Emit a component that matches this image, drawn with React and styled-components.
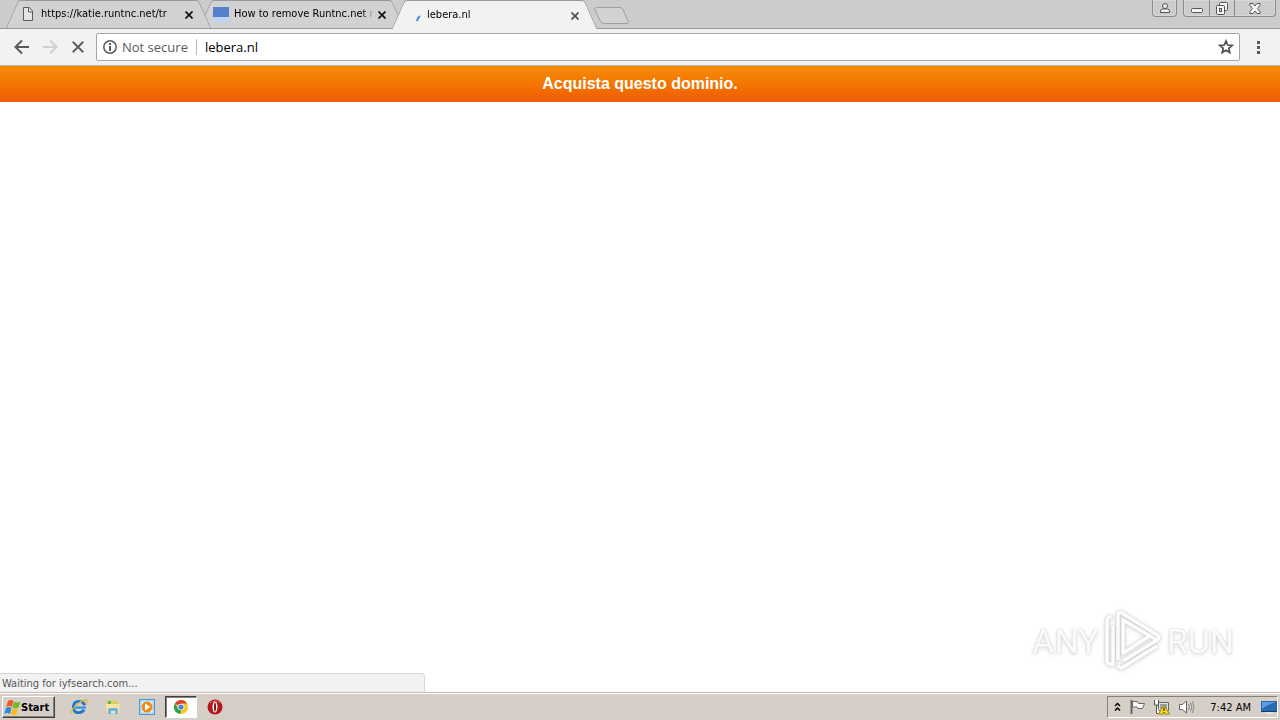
import React from "react";
import styled, { createGlobalStyle } from "styled-components";

const ui = `"DejaVu Sans Condensed", "DejaVu Sans", "Noto Sans", sans-serif`;

const GlobalStyle = createGlobalStyle`
  *, *::before, *::after { box-sizing: border-box; }
  body { margin: 0; background: #fff; font-family: ${ui}; font-size: 11px; color: #000; }
  button, input { font: inherit; color: inherit; }
  button { margin: 0; padding: 0; border: 0; background: none; }
  svg { display: block; flex: none; }
`;

const Screen = styled.div`
  min-height: 100vh;
  display: flex;
  flex-direction: column;
`;

const TabStrip = styled.header`
  height: 29px;
  display: flex;
  align-items: flex-start;
  padding: 0 4px 0 12px;
  background: #ccc;
  border-bottom: 1px solid #999;
`;

const Tabs = styled.div`
  display: flex;
`;

const TabShell = styled.div`
  position: relative;
  z-index: ${(p) => p.$level};
  width: 193px;
  height: ${(p) => (p.$active ? 29 : 28)}px;
  display: flex;
  align-items: center;
  padding: 0 8px;

  &::before, &::after {
    content: "";
    position: absolute;
    z-index: -1;
    top: 0;
    bottom: 0;
    width: 60%;
    background: ${(p) => (p.$active ? "#f2f2f2" : "#d2d2d2")};
    border-top: 1px solid #999;
  }
  &::before {
    left: 0;
    border-left: 1px solid #999;
    border-top-left-radius: 3px;
    transform: skewX(-24deg);
  }
  &::after {
    right: 0;
    border-right: 1px solid #999;
    border-top-right-radius: 3px;
    transform: skewX(24deg);
  }
`;

const TabLabel = styled.button`
  flex: 1;
  min-width: 0;
  display: flex;
  align-items: center;
  gap: 5px;
  height: 28px;
`;

const TabTitle = styled.span`
  flex: 1;
  overflow: hidden;
  white-space: nowrap;
  text-align: left;
  line-height: 16px;
  mask-image: linear-gradient(to right, #000 92%, transparent);
`;

const TabClose = styled.button`
  width: 16px;
  height: 18px;
  display: grid;
  place-items: end center;
  padding-bottom: 4px;
`;

const NewTab = styled.button`
  margin: 7px 0 0 3px;
`;

const WindowControls = styled.div`
  margin-left: auto;
  display: flex;
`;

const ControlGroup = styled.div`
  display: flex;
  height: 17px;
  margin-left: 6px;
  border: 1px solid #8c8c8c;
  border-top: 0;
  border-radius: 0 0 4px 4px;
  box-shadow: inset 0 0 0 1px #d8d8d8;
`;

const ControlButton = styled.button`
  width: ${(p) => p.$width}px;
  display: grid;
  place-items: center;
  & + & { border-left: 1px solid #8c8c8c; }
`;

const Toolbar = styled.nav`
  height: 37px;
  display: flex;
  align-items: center;
  padding: 0 8px;
  background: #f2f2f2;
  border-bottom: 1px solid #b6b4ae;
`;

const ToolButton = styled.button`
  width: 28px;
  height: 28px;
  display: grid;
  place-items: center;
`;

const Omnibox = styled.form`
  flex: 1;
  height: 28px;
  display: flex;
  align-items: center;
  margin: 0 4px;
  padding: 0 5px 0 6px;
  background: #fff;
  border: 1px solid #a6a6a6;
  border-radius: 2px;
  font: 13px "Open Sans", "Noto Sans", sans-serif;
`;

const Security = styled.button`
  display: flex;
  align-items: center;
  gap: 5px;
  padding-right: 8px;
  line-height: 16px;
  border-right: 1px solid #b8b8b8;
  color: #5a5a5a;
`;

const Address = styled.input`
  flex: 1;
  min-width: 0;
  padding: 0 8px;
  border: 0;
  outline: 0;
  background: none;
  line-height: 20px;
`;

const Page = styled.main`
  flex: 1;
  display: flex;
  flex-direction: column;
`;

const Banner = styled.a`
  height: 36px;
  background: linear-gradient(#f78d05, #ef5c00);
  color: #fff;
  text-align: center;
  text-decoration: none;
  font: bold 16px/36px "Liberation Sans", Arial, sans-serif;
`;

const PageFoot = styled.div`
  flex: 1;
  display: flex;
  align-items: flex-end;
  justify-content: space-between;
`;

const StatusBubble = styled.output`
  flex: 0 1 425px;
  height: 19px;
  padding: 0 2px;
  line-height: 19px;
  color: #555;
  background: #f2f2f2;
  border: 1px solid #d8d8d8;
  border-width: 1px 1px 0 0;
  border-top-right-radius: 4px;
`;

const Watermark = styled.div`
  display: flex;
  align-items: center;
  gap: 4px;
  margin: 0 46px 19px 0;
  color: #fbfbfb;
  font: 34px/60px "Roboto", sans-serif;
  text-shadow: 0 0 2px #c8c8c8, 0 2px 4px #ddd;
`;

const Mark = styled.svg`
  filter: drop-shadow(0 0 1px #c4c4c4) drop-shadow(0 1px 2px #e0e0e0);
`;

const Taskbar = styled.footer`
  height: 28px;
  display: flex;
  align-items: center;
  padding: 1px 2px 0;
  background: #d5cfc7;
  border-top: 1px solid #c4c0b8;
  box-shadow: inset 0 1px #fff;
`;

const StartButton = styled.button`
  width: 53px;
  height: 22px;
  display: flex;
  align-items: center;
  padding-left: 1px;
  border: 1px solid;
  border-color: #fff #404040 #404040 #fff;
  box-shadow: inset -1px -1px #858078;
  font-weight: bold;
`;

const Launchers = styled.div`
  display: flex;
  margin-left: 8px;
  gap: 2px;
`;

const Launcher = styled.button`
  width: 32px;
  height: 22px;
  display: grid;
  place-items: center;
  border: 1px solid transparent;
  ${(p) => p.$active && `
    background: #fff;
    border-color: #404040 #fff #fff #404040;
    box-shadow: inset 1px 1px #858078;
  `}
`;

const Tray = styled.div`
  height: 22px;
  margin-left: auto;
  display: flex;
  align-items: center;
  gap: 8px;
  padding: 0 0 0 6px;
  border: 1px solid;
  border-color: #858078 #fff #fff #858078;
`;

const Clock = styled.time`
  margin: 0 2px 0 7px;
  white-space: nowrap;
`;

const Cross = ({ size = 8, color = "#222", width = 2 }) => (
  <svg width={size} height={size} viewBox="0 0 8 8" stroke={color} strokeWidth={width}>
    <path d="M.5.5l7 7M7.500.5l-7 7" />
  </svg>
);

const PageIcon = () => (
  <svg width="16" height="16" fill="none" stroke="#5c5c5c">
    <path d="M3.500 1.500h6l3 3.500v9.500h-9z" fill="#e4e4e4" />
    <path d="M8.500 1.500v4.500h4" />
  </svg>
);

const BlueIcon = () => (
  <svg width="16" height="16">
    <path d="M0 1h16v10H0z" fill="#5580cc" />
    <path d="M0 11h16v5H0z" fill="#bdd4f5" />
  </svg>
);

const Spinner = () => (
  <svg width="16" height="16" fill="none" stroke="#4a86e8" strokeWidth="2">
    <path d="M11 14q.5-3 3-5" />
  </svg>
);

const Arrow = ({ color, flip }) => (
  <svg width="16" height="16" fill="none" stroke={color} strokeWidth="2">
    <path d={flip ? "M1 8h13M8 1.500l6.500 6.500L8 14.500" : "M15 8H2M8 1.500L1.500 8 8 14.500"} />
  </svg>
);

const InfoIcon = () => (
  <svg width="14" height="14" fill="none" stroke="#5a5a5a">
    <circle cx="7" cy="7" r="6.200" strokeWidth="1.500" />
    <path d="M7 3v2M7 6v5" strokeWidth="2" />
  </svg>
);

const StarIcon = () => (
  <svg width="16" height="16" fill="none" stroke="#505050" strokeWidth="1.700">
    <path d="M8 2l1.700 4 4.500.4-3.400 2.900 1 4.300L8 11.300l-3.800 2.300 1-4.300L1.800 6.400l4.500-.4z" />
  </svg>
);

const MenuIcon = () => (
  <svg width="3" height="14" fill="#5a5a5a">
    <path d="M0 1h3v3H0zM0 6h3v3H0zM0 11h3v3H0z" />
  </svg>
);

const NewTabIcon = () => (
  <svg width="36" height="18" fill="#d2d2d2" stroke="#a0a0a0">
    <path d="M2.500.5h23.500q2 0 3 2l5 11.500q1 2.500-1 2.500H9.500q-2 0-3-2L1 3Q0 .5 2.500.5z" />
  </svg>
);

const UserIcon = () => (
  <svg width="12" height="12" fill="#f4f4f4" stroke="#555">
    <circle cx="6" cy="4" r="2.500" />
    <path d="M1.500 10.500V9q0-1.500 2-2h5q2 .5 2 2v1.500z" />
  </svg>
);

const MinimizeIcon = () => (
  <svg width="12" height="12" fill="#f4f4f4" stroke="#555">
    <rect x=".5" y="6.500" width="11" height="4" rx="1" />
  </svg>
);

const RestoreIcon = () => (
  <svg width="14" height="13" fill="#f4f4f4" stroke="#555">
    <rect x="4.500" y=".5" width="8" height="8" rx="1" />
    <rect x="1.500" y="3.500" width="8" height="9" rx="1" />
    <rect x="4.500" y="6.500" width="2" height="3" fill="#ccc" />
  </svg>
);

const CloseIcon = () => (
  <svg width="12" height="11" fill="#f4f4f4" stroke="#555">
    <path d="M1 .5h3L6 3 8 .5h3v2L8.500 5.500 11 8.500v2H8L6 8l-2 2.500H1v-2L3.500 5.500 1 2.500z" />
  </svg>
);

const AnyRunMark = () => (
  <Mark width="60" height="64" viewBox="0 0 60 64" fill="none" strokeLinejoin="round">
    <g stroke="#fdfdfd" strokeWidth="3.500">
      <path d="M9 8q-5-1-5 4v39q0 5 6 4V17" />
      <path d="M15 6q0-4 4-2l35 22q4 3 0 5L20 11v33l28-18" />
      <path d="M15 6v45M54 31L20 52M54 37L20 58q-4 2-5-2" />
    </g>
  </Mark>
);

const WindowsFlag = () => (
  <svg width="17" height="17" viewBox="0 0 17 17">
    <path d="M4 2q3-2 5.500 0L8 8Q5 6 2 8z" fill="#ef5b28" />
    <path d="M10 2.500q3 2 6.500 0l-2 6q-3 2-6 0z" fill="#76b82a" />
    <path d="M2 9q3-2 5.500 0L6 15q-3-2-6 0z" fill="#2e8cde" />
    <path d="M8.500 9.500q3 2 5.500 0L12.500 15q-3 2-6 0z" fill="#fbbd12" />
  </svg>
);

const ExplorerIcon = () => (
  <svg width="18" height="18" viewBox="0 0 16 16" fill="none">
    <path d="M13 6.500q-1-3.500-5-3.500-5 0-5 5.200T8 13q3 0 4.500-2.500" stroke="#1979d2" strokeWidth="2.500" />
    <path d="M4 8.500h10.200" stroke="#2f95e4" strokeWidth="2" />
    <path d="M2 14Q-1 13 5 7q8-7 10-5 .7 1-1 3" stroke="#e6b93c" strokeWidth="1.200" />
  </svg>
);

const FolderIcon = () => (
  <svg width="16" height="16">
    <path d="M1 3l4-2 2 1h6v10H1z" fill="#e8c75c" />
    <path d="M3 2h3v3H3z" fill="#57b560" />
    <path d="M1 5h14l-1 9H2z" fill="#f8e5a0" />
    <path d="M3 15v-4q0-2 2-2h6q2 0 2 2v4h-3v-3H6v3z" fill="#6db6e8" />
  </svg>
);

const PlayerIcon = () => (
  <svg width="16" height="16">
    <rect x=".5" y=".5" width="15" height="15" fill="#a9d5f4" stroke="#4b9ad4" />
    <rect x="2.500" y="2.500" width="11" height="11" fill="#e8f5ff" />
    <circle cx="8" cy="8" r="5.500" fill="#f28b15" />
    <path d="M6 4.500v7L11.500 8z" fill="#fff" />
  </svg>
);

const ChromeIcon = () => (
  <svg width="16" height="16" viewBox="0 0 16 16">
    <circle cx="8" cy="8" r="7" fill="#fbc51c" />
    <path d="M8 8L2 4.400A7 7 0 0 1 14.100 4.600H8z" fill="#e13b2e" />
    <path d="M2 4.400L5 9.500 8 11 7.200 15A7 7 0 0 1 2 4.400z" fill="#2ba24c" />
    <circle cx="8" cy="8" r="3.300" fill="#fff" />
    <circle cx="8" cy="8" r="2.600" fill="#3e82e5" />
  </svg>
);

const OperaIcon = () => (
  <svg width="16" height="16">
    <circle cx="8" cy="8" r="7.500" fill="#b5151b" />
    <path d="M3 4q5-4 10 0" stroke="#e0686a" fill="none" />
    <ellipse cx="8" cy="8" rx="2.500" ry="5.500" fill="#fff" />
    <ellipse cx="8" cy="8" rx="1" ry="4.500" fill="#8a1014" />
  </svg>
);

const ChevronIcon = () => (
  <svg width="7" height="10" fill="none" stroke="#000" strokeWidth="1.500">
    <path d="M1 4l2.500-2.500L6 4M1 8.500L3.500 6 6 8.500" />
  </svg>
);

const FlagIcon = () => (
  <svg width="16" height="16" fill="#fff" stroke="#666">
    <path d="M3.500 2.500h5l1 2h6l-2 5H9l-1-1.500H3.500z" />
    <path d="M2.500 1v14" strokeWidth="2" />
  </svg>
);

const NetworkIcon = () => (
  <svg width="17" height="16">
    <path d="M5.500 3.500h10v8h-10z" fill="#e2e2e2" stroke="#666" />
    <path d="M7 5h7v5H7z" fill="#92a4b2" />
    <path d="M1.500 1v5h4V1M3.500 6v8.500H7" fill="#fff" stroke="#555" />
    <path d="M11 6l5.500 9h-11z" fill="#ffdb20" stroke="#9f851d" />
    <path d="M11 8.500v3.500M11 13v1" stroke="#000" />
  </svg>
);

const SpeakerIcon = () => (
  <svg width="17" height="16" fill="#fff" stroke="#666">
    <path d="M1.500 5.500h3L8.500 2v12L4.500 10.500h-3z" />
    <path d="M10.500 5q2 3 0 6M12.500 3.500q3 4.500 0 9M14.500 2q3 6 0 12" fill="none" stroke="#888" />
  </svg>
);

const DesktopIcon = () => (
  <svg width="16" height="14">
    <path d="M0 1h16v10H0z" fill="#2869b2" />
    <path d="M1 2h14Q7 4 1 9z" fill="#5a9ee0" />
    <path d="M0 11.500h16" stroke="#163f78" />
    <path d="M4 13h8" stroke="#f5f5f5" />
  </svg>
);

const tabs = [
  { title: "https://katie.runtnc.net/tr", icon: <PageIcon />, level: 2 },
  { title: "How to remove Runtnc.net r", icon: <BlueIcon />, level: 1 },
  { title: "lebera.nl", icon: <Spinner />, level: 3, active: true },
];

const launchers = [
  { name: "Internet Explorer", icon: <ExplorerIcon /> },
  { name: "Windows Explorer", icon: <FolderIcon /> },
  { name: "Media Player", icon: <PlayerIcon /> },
  { name: "Google Chrome", icon: <ChromeIcon />, active: true },
  { name: "Opera", icon: <OperaIcon /> },
];

export default function App() {
  return (
    <Screen>
      <GlobalStyle />
      <TabStrip>
        <Tabs>
          {tabs.map((tab) => (
            <TabShell key={tab.title} $active={tab.active} $level={tab.level}>
              <TabLabel>
                {tab.icon}
                <TabTitle>{tab.title}</TabTitle>
              </TabLabel>
              <TabClose aria-label={`Close ${tab.title}`}>
                <Cross color={tab.active ? "#505050" : "#111"} width={1.7} />
              </TabClose>
            </TabShell>
          ))}
        </Tabs>
        <NewTab aria-label="New tab"><NewTabIcon /></NewTab>
        <WindowControls>
          <ControlGroup>
            <ControlButton $width={23} aria-label="User"><UserIcon /></ControlButton>
          </ControlGroup>
          <ControlGroup>
            <ControlButton $width={25} aria-label="Minimize"><MinimizeIcon /></ControlButton>
            <ControlButton $width={25} aria-label="Restore"><RestoreIcon /></ControlButton>
            <ControlButton $width={41} aria-label="Close"><CloseIcon /></ControlButton>
          </ControlGroup>
        </WindowControls>
      </TabStrip>
      <Toolbar>
        <ToolButton aria-label="Back"><Arrow color="#5a5a5a" /></ToolButton>
        <ToolButton aria-label="Forward"><Arrow color="#d0d0d0" flip /></ToolButton>
        <ToolButton aria-label="Stop"><Cross size={12} color="#5a5a5a" width={1.2} /></ToolButton>
        <Omnibox>
          <Security type="button"><InfoIcon />Not secure</Security>
          <Address aria-label="Address" defaultValue="lebera.nl" />
          <button type="button" aria-label="Bookmark"><StarIcon /></button>
        </Omnibox>
        <ToolButton aria-label="Menu"><MenuIcon /></ToolButton>
      </Toolbar>
      <Page>
        <Banner href="#">Acquista questo dominio.</Banner>
        <PageFoot>
          <StatusBubble>Waiting for iyfsearch.com...</StatusBubble>
          <Watermark><span>ANY</span><AnyRunMark /><span>RUN</span></Watermark>
        </PageFoot>
      </Page>
      <Taskbar>
        <StartButton><WindowsFlag />Start</StartButton>
        <Launchers>
          {launchers.map((item) => (
            <Launcher key={item.name} aria-label={item.name} $active={item.active}>{item.icon}</Launcher>
          ))}
        </Launchers>
        <Tray>
          <ChevronIcon />
          <FlagIcon />
          <NetworkIcon />
          <SpeakerIcon />
          <Clock>7:42 AM</Clock>
          <DesktopIcon />
        </Tray>
      </Taskbar>
    </Screen>
  );
}
